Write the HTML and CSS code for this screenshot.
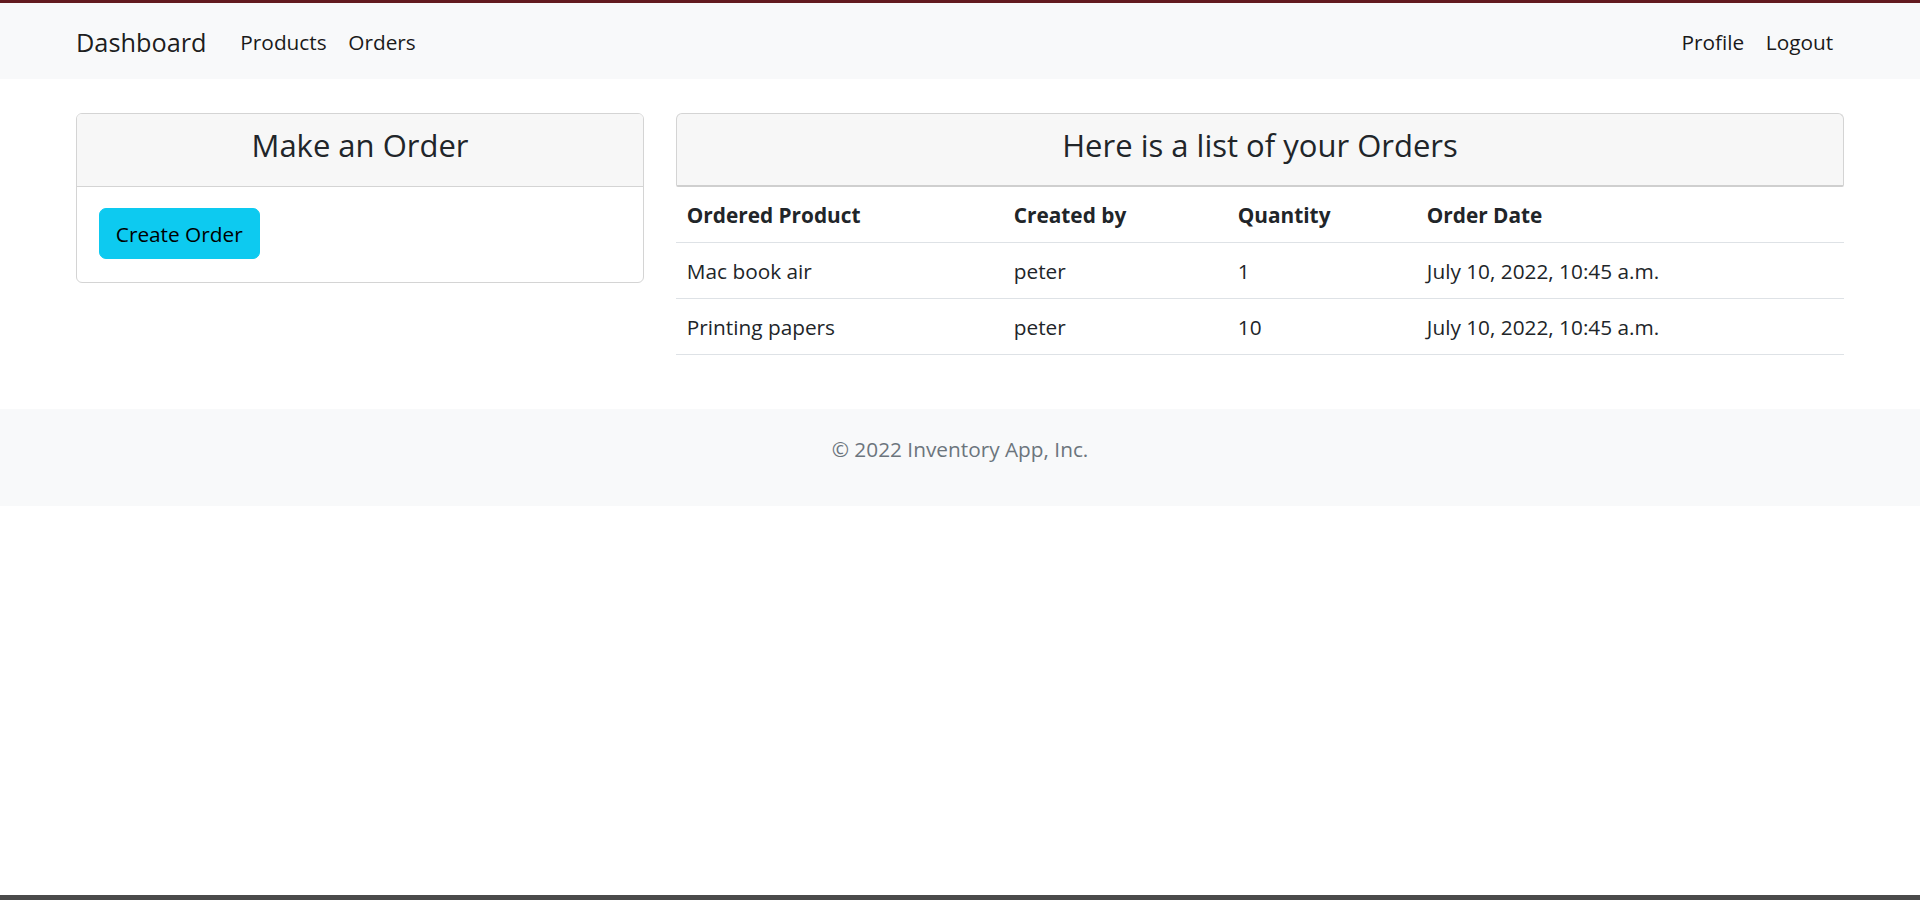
FILE: index.html
```html
<!DOCTYPE html>
<html lang="en">
<head>
<meta charset="utf-8">
<title>Orders</title>
<link rel="stylesheet" href="styles.css">
</head>
<body>
<div class="topline"></div>
<nav class="navbar">
  <a class="brand" href="#">Dashboard</a>
  <ul class="nav-list">
    <li><a class="nav-link" href="#">Products</a></li>
    <li><a class="nav-link" href="#">Orders</a></li>
  </ul>
  <ul class="nav-list nav-right">
    <li><a class="nav-link" href="#">Profile</a></li>
    <li><a class="nav-link" href="#">Logout</a></li>
  </ul>
</nav>
<main class="content">
  <section class="card">
    <div class="card-header"><h3 class="card-title">Make an Order</h3></div>
    <div class="card-body">
      <button class="btn-info" type="button">Create Order</button>
    </div>
  </section>
  <section class="orders">
    <div class="orders-header"><h3 class="card-title">Here is a list of your Orders</h3></div>
    <table class="table">
      <thead>
        <tr><th class="c1">Ordered Product</th><th class="c2">Created by</th><th class="c3">Quantity</th><th class="c4">Order Date</th></tr>
      </thead>
      <tbody>
        <tr><td>Mac book air</td><td>peter</td><td>1</td><td>July 10, 2022, 10:45 a.m.</td></tr>
        <tr><td>Printing papers</td><td>peter</td><td>10</td><td>July 10, 2022, 10:45 a.m.</td></tr>
      </tbody>
    </table>
  </section>
</main>
<footer class="footer">
  <p class="footer-text">© 2022 Inventory App, Inc.</p>
</footer>
<div class="bottombar"></div>
</body>
</html>
```
FILE: styles.css
```css
* { box-sizing: border-box; }
html, body { margin: 0; padding: 0; }
body {
  font-family: "Segoe UI", "Open Sans", "Noto Sans", sans-serif;
  font-size: 20.8px;
  line-height: 32.4px;
  color: #212529;
  background: #fff;
  min-height: 100vh;
  display: flex;
  flex-direction: column;
}
a { text-decoration: none; color: inherit; }

.topline { height: 3px; background: #621a1f; flex: none; }

.navbar {
  display: flex;
  align-items: center;
  background: #f8f9fa;
  padding: 10.8px 76px 10.8px 76px;
  height: 75.6px;
  flex: none;
}
.brand {
  font-size: 25.3px;
  line-height: 40px;
  color: rgba(0,0,0,.9);
  padding: 6.6px 0 4.2px;
  margin-right: 23px;
}
.nav-list {
  list-style: none;
  display: flex;
  margin: 0;
  padding: 0;
}
.nav-right { margin-left: auto; }
.nav-link {
  display: block;
  padding: 12px 10.8px 9.6px;
  color: #1a1a1a;
}

.content {
  display: grid;
  grid-template-columns: 568px 1fr;
  gap: 32px;
  align-items: start;
  padding: 0 76px;
  margin-top: 34.5px;
}
.card {
  border: 1px solid #d4d4d4;
  border-radius: 6px;
  overflow: hidden;
}
.card-header {
  background: #f7f7f7;
  border-bottom: 1px solid #d4d4d4;
  padding: 8.5px 21.6px 18px;
  text-align: center;
}
.card-title {
  margin: 0;
  font-size: 31px;
  line-height: 45px;
  font-weight: 400;
  color: #212529;
}
.card-body { padding: 21.6px 21.6px 23px; }
.btn-info {
  font-family: inherit;
  font-size: 20.8px;
  line-height: 32.4px;
  color: #000;
  background: #0dcaf0;
  border: 1.35px solid #0dcaf0;
  border-radius: 7px;
  padding: 9.3px 16.2px 6.9px;
  cursor: pointer;
}

.orders-header {
  background: #f7f7f7;
  border: 1px solid #d4d4d4;
  border-bottom: 2px solid #cfcfcf;
  border-radius: 6px 6px 2px 2px;
  padding: 8.5px 21.6px 17.5px;
  text-align: center;
}
.table {
  width: 100%;
  border-collapse: collapse;
  margin-bottom: 21.6px;
}
.table th, .table td {
  text-align: left;
  padding: 11.7px 10.8px 10.9px;
  border-bottom: 1.35px solid #dee2e6;
  vertical-align: top;
}
.table th { font-weight: 700; }
.c1 { width: 327px; }
.c2 { width: 224px; }
.c3 { width: 189px; }

.footer {
  margin-top: 32.4px;
  background: #f8f9fa;
  padding: 24px 0 21.6px;
  text-align: center;
  flex: none;
}
.footer-text { margin: 0 0 19.2px; color: #6c757d; }

.bottombar {
  margin-top: auto;
  height: 5px;
  background: #4a4a4a;
  flex: none;
}
```
